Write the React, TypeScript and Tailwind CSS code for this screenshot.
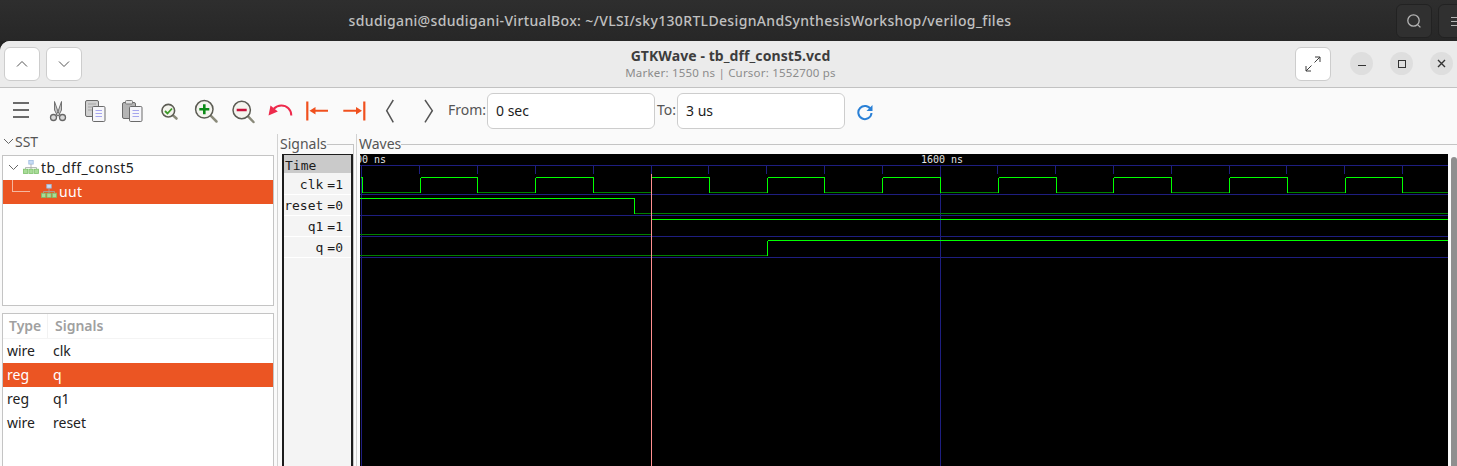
import React from 'react';

const ticks = [419, 477, 535, 593, 651, 708, 766, 824, 882, 997, 1055, 1113, 1171, 1229, 1286, 1344, 1402];
const clockEdges = [362, 420, 477, 535, 593, 651, 709, 767, 824, 882, 940, 998, 1056, 1113, 1171, 1229, 1287, 1345, 1402];

const BRIGHT = '#00ff00';
const DARK = '#008000';
const GRID = '#1e1e80';

function Waves() {
  // page x to svg x
  const px = (x: number) => x - 360 + 0.5;
  const xs = [360, ...clockEdges, 1448];
  return (
    <svg width="1088" height="312" className="block bg-black" shapeRendering="crispEdges">
      <text x="-4" y="9" fill="#e4e4e4" className="font-['DejaVu_Sans_Mono'] text-[10px]">00 ns</text>
      <text x="561" y="9" fill="#e4e4e4" className="font-['DejaVu_Sans_Mono'] text-[10px]">1600 ns</text>
      {[11.5, 40.5, 61.5, 82.5, 103.5].map((y) => (
        <line key={y} x1="0" x2="1088" y1={y} y2={y} stroke={GRID} />
      ))}
      {ticks.map((t) => (
        <line key={t} x1={px(t)} x2={px(t)} y1="11" y2="20" stroke={GRID} />
      ))}
      <line x1={px(361)} x2={px(361)} y1="11" y2="312" stroke={GRID} />
      <line x1={px(940)} x2={px(940)} y1="11" y2="312" stroke={GRID} />

      {/* clk */}
      {xs.slice(0, -1).map((x, i) => {
        const high = i % 2 === 0;
        const y = high ? 23.5 : 38.5;
        return <line key={x} x1={px(x)} x2={px(xs[i + 1])} y1={y} y2={y} stroke={high ? BRIGHT : DARK} />;
      })}
      {clockEdges.map((x) => (
        <line key={x} x1={px(x)} x2={px(x)} y1="23.5" y2="38.5" stroke={BRIGHT} />
      ))}

      {/* reset */}
      <line x1="0" x2={px(634)} y1="44.5" y2="44.5" stroke={BRIGHT} />
      <line x1={px(634)} x2={px(634)} y1="44.5" y2="59.5" stroke={BRIGHT} />
      <line x1={px(634)} x2="1088" y1="59.5" y2="59.5" stroke={DARK} />

      {/* q1 */}
      <line x1="0" x2={px(651)} y1="80.5" y2="80.5" stroke={DARK} />
      <line x1={px(651)} x2="1088" y1="65.5" y2="65.5" stroke={BRIGHT} />

      {/* q */}
      <line x1="0" x2={px(767)} y1="101.5" y2="101.5" stroke={DARK} />
      <line x1={px(767)} x2={px(767)} y1="86.5" y2="101.5" stroke={BRIGHT} />
      <line x1={px(767)} x2="1088" y1="86.5" y2="86.5" stroke={BRIGHT} />

      {/* marker */}
      <line x1={px(651)} x2={px(651)} y1="20" y2="312" stroke="#ff9090" />
    </svg>
  );
}

function HierarchyIcon() {
  return (
    <svg width="16" height="14" viewBox="0 0 16 14" className="block shrink-0">
      <rect x="5.8" y="0.5" width="4.4" height="3.6" fill="#c8dcf6" stroke="#9dbce2" strokeWidth="0.8" />
      <path d="M8 4v3.500M2.500 9V7.500h11V9M8 7.500V9" fill="none" stroke="#a4a8a8" strokeWidth="0.8" />
      <rect x="0.5" y="9.2" width="4.200" height="4.200" fill="#a8dc98" stroke="#7cc06a" strokeWidth="0.8" />
      <rect x="5.900" y="9.2" width="4.200" height="4.200" fill="#a8dc98" stroke="#7cc06a" strokeWidth="0.8" />
      <rect x="11.300" y="9.2" width="4.200" height="4.200" fill="#a8dc98" stroke="#7cc06a" strokeWidth="0.8" />
    </svg>
  );
}

function ToolIcon({ children }: { children: React.ReactNode }) {
  return (
    <button className="flex w-[37px] h-[26px] items-center justify-center shrink-0">
      <svg width="25" height="26" viewBox="0 0 25 26" className="block">
        {children}
      </svg>
    </button>
  );
}

function Glass({ cx, cy, r, hx, hy, sw = 1.5 }: { cx: number; cy: number; r: number; hx: number; hy: number; sw?: number }) {
  const d = Math.SQRT1_2 * r;
  return (
    <>
      <line x1={cx + d} y1={cy + d} x2={hx} y2={hy} stroke="#8a8a7a" strokeWidth={sw + 1} strokeLinecap="round" />
      <circle cx={cx} cy={cy} r={r} fill="#f4f4ee" stroke="#5c5c54" strokeWidth={sw} />
    </>
  );
}

function Sheet({ x, y, w, h }: { x: number; y: number; w: number; h: number }) {
  return (
    <g>
      <rect x={x} y={y} width={w} height={h} rx="1.2" fill="#f6f6fa" stroke="#6a6a6a" />
      {[4, 7, 10].map((o) => (
        <line key={o} x1={x + 3} x2={x + w - 3} y1={y + o} y2={y + o} stroke="#a6a6ee" />
      ))}
    </g>
  );
}

function HeaderButton({ children }: { children: React.ReactNode }) {
  return (
    <button className="flex h-[34px] w-[36px] items-center justify-center rounded-[6px] border border-[#cdcdcd] bg-white">
      {children}
    </button>
  );
}

function WinButton({ children }: { children: React.ReactNode }) {
  return (
    <button className="flex h-[23px] w-[23px] items-center justify-center rounded-full bg-[#dedede]">
      {children}
    </button>
  );
}

const signalRows = [
  { name: 'clk', value: '1', cls: 'h-[22px] pt-[3px]' },
  { name: 'reset', value: '0', cls: 'h-[21px] pt-[2px]' },
  { name: 'q1', value: '1', cls: 'h-[21px] pt-[2px]' },
  { name: 'q', value: '0', cls: 'h-[21px] pt-[2px]' },
];

const typeRows = [
  { type: 'wire', name: 'clk', selected: false },
  { type: 'reg', name: 'q', selected: true },
  { type: 'reg', name: 'q1', selected: false },
  { type: 'wire', name: 'reset', selected: false },
];

export default function App() {
  return (
    <div className="h-[466px] w-[1457px] overflow-hidden bg-[#222222] font-['Noto_Sans',sans-serif] text-[14px]">
      {/* shell bar */}
      <div className="relative flex h-[41px] items-center justify-center bg-gradient-to-b from-[#2e2e2e] to-[#272727] pr-[97px]">
        <span className="text-[14px] font-medium tracking-[0.34px] text-[#c0c0c0]">
          sdudigani@sdudigani-VirtualBox: ~/VLSI/sky130RTLDesignAndSynthesisWorkshop/verilog_files
        </span>
        <div className="absolute left-[1396px] top-[4px] flex h-[34px] w-[36px] items-center justify-center rounded-[6px] border border-[#222222] bg-[#303030]">
          <svg width="16" height="16" viewBox="0 0 16 16" fill="none" stroke="#b4b4b4" strokeWidth="1.3">
            <circle cx="7.5" cy="7.5" r="5.7" />
            <path d="M11.6 11.6l2.8 2.8" />
          </svg>
        </div>
        <div className="absolute left-[1438px] top-[4px] flex h-[34px] w-[36px] flex-col justify-center gap-[3px] rounded-[6px] border border-[#222222] bg-[#303030] pl-[12px]">
          <div className="h-px w-[12px] bg-[#b4b4b4]" />
          <div className="h-px w-[12px] bg-[#b4b4b4]" />
          <div className="h-px w-[12px] bg-[#b4b4b4]" />
        </div>
      </div>

      <div className="overflow-hidden rounded-tl-[10px] bg-[#fafafa]">
        {/* title bar */}
        <div className="relative flex h-[47px] items-start justify-between border-b border-[#c2c2c2] bg-[#ebebeb] pl-[4px] pr-[4px] pt-[6px]">
          <div className="flex gap-[6px]">
            <HeaderButton>
              <svg width="12" height="8" viewBox="0 0 12 8" fill="none" stroke="#555555" strokeWidth="1">
                <path d="M1 6.5l5-5 5 5" />
              </svg>
            </HeaderButton>
            <HeaderButton>
              <svg width="12" height="8" viewBox="0 0 12 8" fill="none" stroke="#555555" strokeWidth="1">
                <path d="M1 1.5l5 5 5-5" />
              </svg>
            </HeaderButton>
          </div>
          <div className="absolute left-[4px] right-0 top-[6px] flex flex-col items-center pointer-events-none">
            <span className="text-[14px] font-bold leading-[18px] tracking-[0.08px] text-[#3d3d3d]">GTKWave - tb_dff_const5.vcd</span>
            <span className="text-[11.5px] leading-[15px] tracking-[0.2px] text-[#8c8c8c]">Marker: 1550 ns | Cursor: 1552700 ps</span>
          </div>
          <div className="flex items-start">
            <HeaderButton>
              <svg width="16" height="16" viewBox="0 0 16 16" fill="none" stroke="#3d3d3d" strokeWidth="1">
                <path d="M9.5 6.5L15 1M10 1h5v5M6.5 9.5L1 15M1 10v5h5" />
              </svg>
            </HeaderButton>
            <div className="ml-[19px] mt-[5px] flex gap-[17px]">
              <WinButton>
                <div className="mt-[4px] h-[1.5px] w-[8px] bg-[#333333]" />
              </WinButton>
              <WinButton>
                <div className="h-[8px] w-[8px] border border-[#333333]" />
              </WinButton>
              <WinButton>
                <svg width="9" height="9" viewBox="0 0 9 9" fill="none" stroke="#333333" strokeWidth="1.4">
                  <path d="M1 1l7 7M8 1l-7 7" />
                </svg>
              </WinButton>
            </div>
          </div>
        </div>

        {/* toolbar */}
        <div className="flex h-[46px] items-center pl-[3px] text-[#5a5a5a]">
          <ToolIcon>
            <path d="M4 5h16M4 12h16M4 19h16" stroke="#3c3c3c" strokeWidth="1.5" />
          </ToolIcon>
          <ToolIcon>
            <path d="M8.5 3.500l3.500 10 1.500 3-2 1.500-3-6zM15.500 3.500l-3.500 10-1.500 3 2 1.500 3-6z" fill="#c4c4c4" stroke="#666666" strokeWidth="0.9" />
            <circle cx="7.5" cy="19.5" r="3" fill="#d8d8d8" stroke="#666666" strokeWidth="1.3" />
            <circle cx="16.5" cy="19.5" r="3" fill="#d8d8d8" stroke="#666666" strokeWidth="1.3" />
          </ToolIcon>
          <ToolIcon>
            <rect x="2.5" y="2.5" width="13" height="16" rx="1.5" fill="#d0d0d0" stroke="#6a6a6a" />
            <path d="M5 6h8M5 9h8M5 12h8" stroke="#a4a4a4" />
            <Sheet x={9.5} y={8.5} w={12.5} h={15} />
          </ToolIcon>
          <ToolIcon>
            <rect x="2.5" y="4.5" width="13" height="16" rx="1.5" fill="#b4b4b4" stroke="#6a6a6a" />
            <rect x="5.5" y="2.5" width="7" height="3.5" rx="1" fill="#e4e4e4" stroke="#7a7a7a" />
            <Sheet x={9.5} y={8.5} w={12.5} h={15} />
          </ToolIcon>
          <ToolIcon>
            <Glass cx={11.3} cy={12.7} r={6.3} hx={19.5} hy={20.5} sw={1.6} />
            <path d="M8 13l2.500 2.500L15 10.500" fill="none" stroke="#3c9a28" strokeWidth="1.8" />
          </ToolIcon>
          <ToolIcon>
            <Glass cx={10.3} cy={11.3} r={8.7} hx={22.5} hy={23.5} />
            <path d="M10.300 6.300v10M5.300 11.300h10" stroke="#0a8a16" strokeWidth="2.6" />
          </ToolIcon>
          <ToolIcon>
            <Glass cx={10.7} cy={12} r={8.7} hx={22.5} hy={24} />
            <path d="M5.700 12h10" stroke="#c8103a" strokeWidth="2.6" />
          </ToolIcon>
          <ToolIcon>
            <path d="M23.300 17.500c0-6-4.500-10-10-10-3 0-5.500 1.200-7.500 3.300" fill="none" stroke="#ee2a4c" strokeWidth="2" />
            <path d="M0.500 17.500L2.500 7.500L9.800 13.500Z" fill="#ee2a4c" />
          </ToolIcon>
          <ToolIcon>
            <path d="M2.300 3.500v19" stroke="#f0501e" strokeWidth="2.200" />
            <path d="M9 12.700h14" stroke="#f0501e" strokeWidth="2" />
            <path d="M4.500 12.700L10.500 9v7.400Z" fill="#f0501e" />
          </ToolIcon>
          <ToolIcon>
            <path d="M22.300 3.500v19" stroke="#f0501e" strokeWidth="2.200" />
            <path d="M1.300 12.700h14" stroke="#f0501e" strokeWidth="2" />
            <path d="M20 12.700L14 9v7.400Z" fill="#f0501e" />
          </ToolIcon>
          <ToolIcon>
            <path d="M14.300 2L7.700 12.700l6.600 11.600" fill="none" stroke="#555555" strokeWidth="1.500" />
          </ToolIcon>
          <ToolIcon>
            <path d="M9 2l7.300 10.700L9 24.300" fill="none" stroke="#555555" strokeWidth="1.500" />
          </ToolIcon>
          <span className="ml-[1px] w-[39px] pb-[3px] text-[14px] text-[#555555]">From:</span>
          <div className="flex h-[36px] w-[168px] items-center rounded-[6px] border border-[#cdcdcd] bg-white pb-[2px] pl-[8px] text-[14px] text-[#1c1c1c]">0 sec</div>
          <span className="ml-[2px] w-[20px] pb-[3px] text-[14px] text-[#555555]">To:</span>
          <div className="flex h-[36px] w-[168px] items-center rounded-[6px] border border-[#cdcdcd] bg-white pb-[2px] pl-[8px] text-[14px] text-[#1c1c1c]">3 us</div>
          <svg width="18" height="18" viewBox="0 0 18 18" fill="none" className="ml-[11px] mt-[1px]">
            <path d="M14.800 6.500A6.600 6.600 0 1 0 15.500 10" stroke="#2a80d6" strokeWidth="2" />
            <path d="M16.500 2v6h-6z" fill="#2a80d6" />
          </svg>
        </div>

        {/* panes */}
        <div className="flex h-[332px]">
          <div className="flex w-[278px] shrink-0 flex-col border-r border-[#d2d2d2] pl-[2px]">
            <div className="flex h-[21px] shrink-0 items-center pb-[6px] text-[#555555]">
              <svg width="11" height="7" viewBox="0 0 11 7" fill="none" stroke="#666666" strokeWidth="1" className="ml-[1px]">
                <path d="M1 1l4.500 4.500L10 1" />
              </svg>
              <span className="ml-[1px] text-[14px]">SST</span>
            </div>
            <div className="h-[151px] w-[272px] shrink-0 border border-[#c4c4c4] bg-white">
              <div className="flex h-[24px] items-center pb-[2px] pl-[5px] tracking-[0.4px] text-[#222222]">
                <svg width="11" height="7" viewBox="0 0 11 7" fill="none" stroke="#666666" strokeWidth="1">
                  <path d="M1 1l4.500 4.500L10 1" />
                </svg>
                <span className="ml-[4px]"><HierarchyIcon /></span>
                <span className="ml-[2px]">tb_dff_const5</span>
              </div>
              <div className="flex h-[24px] items-center bg-[#eb5523] pb-[2px] tracking-[0.4px] text-white">
                <div className="ml-[9px] mt-[-10px] h-[12px] w-[18px] border-b border-l border-[#f5b79f]" />
                <span className="ml-[11px]"><HierarchyIcon /></span>
                <span className="ml-[2px]">uut</span>
              </div>
            </div>
            <div className="mt-[7px] h-[160px] w-[272px] shrink-0 border border-b-0 border-[#c4c4c4] bg-white">
              <div className="flex h-[25px] items-center border-b border-[#f4f4f4] text-[14px] font-semibold text-[#a0a0a0]">
                <span className="flex h-full w-[45px] items-center border-r border-[#f2f2f2] pb-[2px] pl-[6px]">Type</span>
                <span className="pb-[2px] pl-[7px]">Signals</span>
              </div>
              {typeRows.map((r) => (
                <div
                  key={r.name}
                  className={r.selected ? 'flex h-[24px] items-center bg-[#eb5523] pb-[2px] text-white' : 'flex h-[24px] items-center pb-[2px] text-[#222222]'}
                >
                  <span className="w-[50px] pl-[4px]">{r.type}</span>
                  <span>{r.name}</span>
                </div>
              ))}
            </div>
          </div>

          <div className="flex w-[79px] shrink-0 flex-col border-r border-[#d2d2d2]">
            <div className="flex h-[20px] pl-[2px]">
              <span className="text-[14px] leading-[20px] text-[#555555]">Signals</span>
              <div className="mr-[2px] mt-[10px] h-[10px] flex-1 border-r border-t border-[#c4c4c4]" />
            </div>
            <div className="ml-[4px] h-[312px] w-[72px] border-r border-[#c4c4c4]">
              <div className="h-full w-[71px] border-x-2 border-t border-[#1c1c1c] bg-[#f4f4f4] font-['DejaVu_Sans_Mono'] text-[13px] text-[#1c1c1c]">
                <div className="flex h-[18px] items-center bg-[#cacaca] pl-[1px] pt-[3px]">Time</div>
                {signalRows.map((r) => (
                  <div key={r.name} className={`flex items-center justify-end border-b border-white pr-[8px] ${r.cls}`}>
                    <span>{r.name}</span>
                    <span className="ml-[4px]">={r.value}</span>
                  </div>
                ))}
              </div>
            </div>
          </div>

          <div className="flex min-w-0 flex-1 flex-col">
            <div className="flex h-[20px] pl-[2px]">
              <span className="text-[14px] leading-[20px] text-[#555555]">Waves</span>
              <div className="mt-[10px] flex-1 border-t border-[#c4c4c4]" />
            </div>
            <div className="flex pl-[3px]">
              <Waves />
              <div className="ml-[3px] mt-[3px] h-[309px] w-[6px] rounded-t-[3px] bg-[#8f8f8f]" />
            </div>
          </div>
        </div>
      </div>
    </div>
  );
}
